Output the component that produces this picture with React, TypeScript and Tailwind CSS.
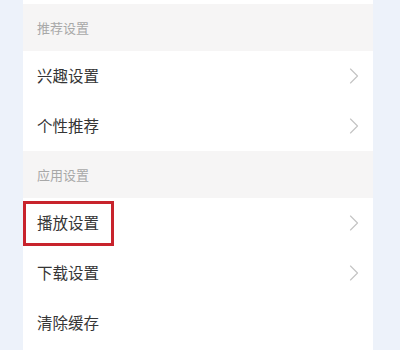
import { ChevronRight } from "lucide-react";

type Item = { label: string; arrow?: boolean; active?: boolean };

const sections: { title: string; items: Item[] }[] = [
  {
    title: "推荐设置",
    items: [
      { label: "兴趣设置", arrow: true },
      { label: "个性推荐", arrow: true },
    ],
  },
  {
    title: "应用设置",
    items: [
      { label: "播放设置", arrow: true, active: true },
      { label: "下载设置", arrow: true },
      { label: "清除缓存" },
    ],
  },
];

function Row({ item }: { item: Item }) {
  return (
    <div className="relative flex h-[50px] items-center justify-between pl-[14px] pr-[5px]">
      {/* highlight box from the screenshot */}
      {item.active && (
        <div className="absolute left-0 top-[3px] h-[45px] w-[91px] border-[3px] border-[#c8232c]" />
      )}
      <span className="text-[15.5px] text-[#353535]">{item.label}</span>
      {item.arrow && (
        <ChevronRight className="h-[28px] w-[28px] text-[#c4c4c4]" strokeWidth={1} />
      )}
    </div>
  );
}

export default function App() {
  return (
    <div
      className="flex h-[350px] w-[400px] overflow-hidden bg-[#edf2fa] pl-[23px] pr-[27px]"
      style={{ fontFamily: '"Noto Sans CJK SC", "Noto Sans", sans-serif' }}
    >
      <div className="flex w-[350px] flex-col bg-white pt-[4px]">
        {sections.map((section) => (
          <div key={section.title}>
            {/* Section header */}
            <div className="flex h-[47px] items-center bg-[#f6f5f5] pl-[14px] text-[13px] text-[#a8a8a8]">
              {section.title}
            </div>
            {section.items.map((item) => (
              <Row key={item.label} item={item} />
            ))}
          </div>
        ))}
      </div>
    </div>
  );
}
